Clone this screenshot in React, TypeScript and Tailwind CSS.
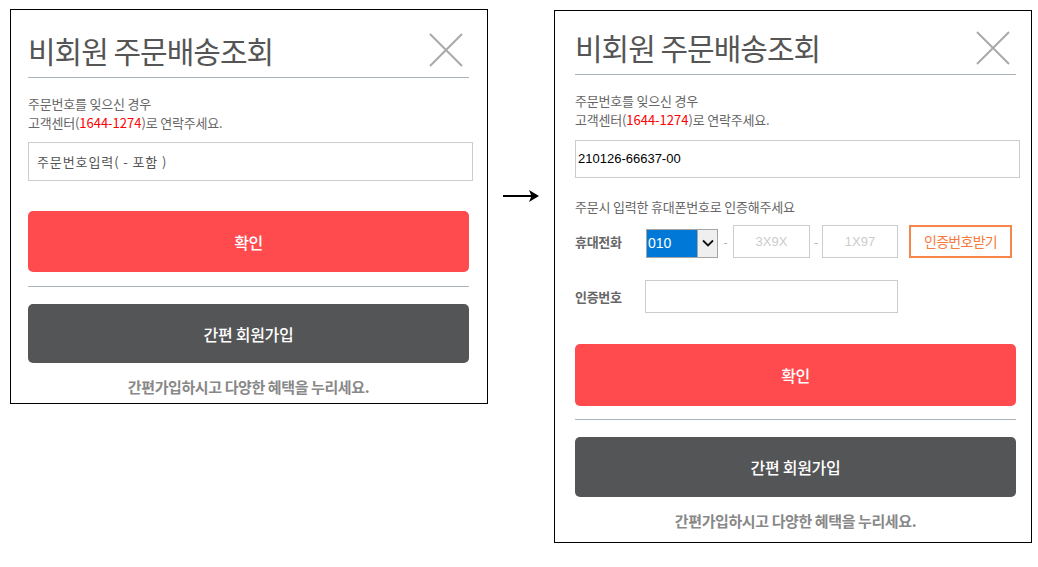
const kr = { fontFamily: '"Noto Sans CJK KR", "Noto Sans", sans-serif' };
const arial = { fontFamily: '"Liberation Sans", Arial, sans-serif' };

function CloseIcon() {
  return (
    <svg width="34" height="34" viewBox="0 0 34 34" fill="none">
      <path d="M1 1 L33 33 M33 1 L1 33" stroke="#a9a9a9" strokeWidth="2" />
    </svg>
  );
}

function Header({ tall }: { tall: boolean }) {
  return (
    <div
      className={`flex justify-between items-start border-b border-[#aab4bd] ${
        tall ? "h-[68px]" : "h-[64px]"
      }`}
    >
      <h1
        className={`text-[30px] leading-[38px] tracking-[-1px] text-[#555] ${
          tall ? "mt-[21px]" : "mt-[17px]"
        }`}
      >
        비회원 주문배송조회
      </h1>
      <div className={`mr-[6px] ${tall ? "mt-[23px]" : "mt-[20px]"}`}>
        <CloseIcon />
      </div>
    </div>
  );
}

function Notice({ top }: { top: string }) {
  return (
    <div className={`${top} text-[13px] leading-[19px] tracking-[-0.2px] text-[#666]`}>
      <p>주문번호를 잊으신 경우</p>
      <p>
        고객센터(<span className="text-[#f00] tracking-normal">1644-1274</span>)로 연락주세요.
      </p>
    </div>
  );
}

function Buttons({ confirmH, darkH, mTop, mDiv }: { confirmH: string; darkH: string; mTop: string; mDiv: string }) {
  return (
    <>
      <button
        className={`${mTop} ${confirmH} w-full rounded-[5px] bg-[#ff4a4e] text-white text-[16px] tracking-[-0.5px] font-medium`}
      >
        확인
      </button>
      <div className={`${mDiv} border-t border-[#aab4bd]`} />
      <button
        className={`mt-[17px] ${darkH} w-full rounded-[5px] bg-[#545557] text-white text-[16px] tracking-[-0.3px] font-medium`}
      >
        간편 회원가입
      </button>
      <p className="mt-[14px] text-center text-[15px] leading-[20px] tracking-[-0.4px] font-bold text-[#888]">
        간편가입하시고 다양한 혜택을 누리세요.
      </p>
    </>
  );
}

export default function App() {
  return (
    <div className="min-h-screen bg-white flex items-start pl-[10px] pt-[9px]" style={kr}>
      {/* before */}
      <div className="w-[478px] h-[395px] border border-black pl-[17px] pr-[17px]">
        <div className="w-[441px]">
          <Header tall />
          <Notice top="mt-[16px]" />
          <div className="mt-[10px] w-[445px] h-[39px] border border-[#ccc] flex items-center pl-[8px] text-[13px] tracking-[0.9px] text-[#555]">
            주문번호입력( - 포함 )
          </div>
          <Buttons confirmH="h-[61px]" darkH="h-[59px]" mTop="mt-[30px]" mDiv="mt-[14px]" />
        </div>
      </div>

      {/* arrow */}
      <div className="w-[66px] flex justify-center mt-[180px]">
        <svg width="36" height="14" viewBox="0 0 36 14">
          <rect x="0" y="6" width="30" height="2" fill="#000" />
          <path d="M36 7 L26 1 L28.5 7 L26 13 Z" fill="#000" />
        </svg>
      </div>

      {/* after */}
      <div className="mt-[1px] w-[478px] h-[533px] border border-black pl-[20px] pr-[15px]">
        <div className="w-[441px]">
          <Header tall={false} />
          <Notice top="mt-[16px]" />
          <div
            className="mt-[11px] w-[445px] h-[38px] border border-[#ccc] flex items-center pl-[2px] text-[13px] text-black"
            style={arial}
          >
            210126-66637-00
          </div>
          <p className="mt-[19px] text-[13px] leading-[19px] tracking-[-0.2px] text-[#666]">
            주문시 입력한 휴대폰번호로 인증해주세요
          </p>
          <div className="mt-[9px] h-[33px] flex items-center">
            <span className="w-[71px] text-[13px] font-bold tracking-[-0.3px] text-[#666]">휴대전화</span>
            <div className="w-[72px] h-[29px] mt-[3px] border border-[#a5a5a5] flex" style={arial}>
              <div className="flex-1 bg-[#0078d7] text-white text-[14px] flex items-center pl-[1px]">010</div>
              <div className="w-[20px] bg-[#efefef] border-l border-[#a5a5a5] flex items-center justify-center">
                <svg width="12" height="8" viewBox="0 0 12 8" fill="none">
                  <path d="M1 1.5 L6 6.5 L11 1.5" stroke="#111" strokeWidth="1.8" />
                </svg>
              </div>
            </div>
            <span className="w-[15px] text-center text-[12px] text-[#aaa]">-</span>
            <div
              className="w-[77px] h-[33px] border border-[#ccc] flex items-center justify-center text-[13px] text-[#ccc]"
              style={arial}
            >
              3X9X
            </div>
            <span className="w-[12px] text-center text-[12px] text-[#aaa]">-</span>
            <div
              className="w-[76px] h-[33px] border border-[#ccc] flex items-center justify-center text-[13px] text-[#ccc]"
              style={arial}
            >
              1X97
            </div>
            <div className="ml-[11px] w-[103px] h-[33px] border-2 border-[color:#f7864b] text-[#f57a3c] text-[14px] tracking-[-0.7px] flex items-center justify-center">
              인증번호받기
            </div>
          </div>
          <div className="mt-[22px] h-[33px] flex items-center">
            <span className="w-[70px] text-[13px] font-bold tracking-[-0.3px] text-[#666]">인증번호</span>
            <div className="w-[253px] h-[33px] border border-[#ccc]" />
          </div>
          <Buttons confirmH="h-[62px]" darkH="h-[60px]" mTop="mt-[31px]" mDiv="mt-[13px]" />
        </div>
      </div>
    </div>
  );
}
